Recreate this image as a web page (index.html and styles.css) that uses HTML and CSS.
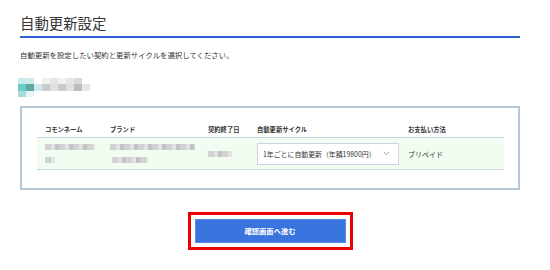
FILE: index.html
```html
<!DOCTYPE html>
<html lang="ja">
<head>
<meta charset="utf-8">
<link rel="stylesheet" href="styles.css">
</head>
<body>
<div class="page">
  <h1 class="title">自動更新設定</h1>
  <p class="desc">自動更新を設定したい契約と更新サイクルを選択してください。</p>
  <div class="blob">
    <span class="c t2"></span><span class="c t3"></span><span class="c w"></span><span class="c l1"></span><span class="c l2"></span><span class="c l1"></span><span class="c l2"></span><span class="c m1"></span><span class="c w"></span>
    <span class="c t1"></span><span class="c t4"></span><span class="c t3"></span><span class="c m2"></span><span class="c l3"></span><span class="c m2"></span><span class="c l3"></span><span class="c m3"></span><span class="c l2"></span>
    <span class="c t5"></span><span class="c t6"></span><span class="c w"></span><span class="c w"></span><span class="c w"></span><span class="c w"></span><span class="c w"></span><span class="c w"></span><span class="c w"></span>
  </div>
  <div class="box">
    <div class="grid head">
      <div class="cell">コモンネーム</div>
      <div class="cell">ブランド</div>
      <div class="cell">契約終了日</div>
      <div class="cell">自動更新サイクル</div>
      <div class="cell">お支払い方法</div>
    </div>
    <div class="grid row">
      <div class="cell blur">
        <div class="bl"><span class="b w50"></span></div>
        <div class="bl"><span class="b w10"></span></div>
      </div>
      <div class="cell blur">
        <div class="bl"><span class="b w85"></span></div>
        <div class="bl"><span class="b w36 off"></span></div>
      </div>
      <div class="cell blur">
        <div class="bl"><span class="b w24"></span></div>
      </div>
      <div class="cell">
        <div class="select">
          <span>1年ごとに自動更新（年額19800円）</span>
          <svg class="chev" width="7" height="5" viewBox="0 0 7 5"><path d="M0.8 1 L3.5 3.7 L6.2 1" fill="none" stroke="#8a97a6" stroke-width="0.9"/></svg>
        </div>
      </div>
      <div class="cell pay">プリペイド</div>
    </div>
  </div>
  <div class="actions">
    <div class="frame">
      <button class="btn">確認画面へ進む</button>
    </div>
  </div>
</div>
</body>
</html>
```
FILE: styles.css
```css
* { box-sizing: border-box; }
body {
  margin: 0;
  background: #fff;
  font-family: "Noto Sans CJK JP", "Noto Sans", sans-serif;
  color: #333;
}
.page {
  width: 500px;
  margin-left: 20px;
  padding-top: 12px;
}
.title {
  margin: 0;
  font-size: 14.4px;
  font-weight: 400;
  line-height: 22px;
  padding-bottom: 2px;
  border-bottom: 2px solid #2c5fd1;
  color: #333;
}
.desc {
  margin: 12px 0 0;
  font-size: 7.4px;
  line-height: 10px;
  color: #333;
}
.blob {
  display: grid;
  grid-template-columns: repeat(9, 8px);
  grid-template-rows: 6px 7px 6px;
  margin-top: 18px;
  margin-left: -2px;
  width: 72px;
}
.c { display: block; }
.w { background: #fff; }
.t1 { background: #6ccbc6; }
.t2 { background: #c6ebe8; }
.t3 { background: #cfeae8; }
.t4 { background: #5fa8a5; }
.t5 { background: #a6dcd9; }
.t6 { background: #e7f4f3; }
.l1 { background: #f0f0f0; }
.l2 { background: #e6e6e6; }
.l3 { background: #e0e0e0; }
.m1 { background: #d9d9d9; }
.m2 { background: #cbcbcb; }
.m3 { background: #bdbdbd; }
.box {
  margin-top: 9px;
  border: 2px solid #b6c6d9;
  padding: 14px 14px 18px 15px;
}
.grid {
  display: grid;
  grid-template-columns: 65px 98px 49px 151px 1fr;
}
.head {
  height: 16px;
  align-items: center;
  border-bottom: 1px solid #c6d6e1;
}
.head .cell {
  font-size: 6.3px;
  font-weight: 700;
  color: #333;
  padding-left: 8px;
}
.row {
  height: 32px;
  background: #f1fdf0;
  border-bottom: 1px solid #c6d6e1;
  align-items: center;
}
.row .cell { padding-left: 8px; }
.bl { height: 13px; display: flex; align-items: center; }
.b {
  display: block;
  height: 6px;
  background: repeating-linear-gradient(90deg, #d2d2d2 0 6px, #e2e2e2 6px 10px, #c4c4c4 10px 14px);
}
.w50 { width: 50px; }
.w10 { width: 10px; }
.w85 { width: 85px; }
.w36 { width: 36px; }
.w24 { width: 24px; }
.off { margin-left: 2px; }
.select {
  width: 142px;
  height: 22px;
  background: #fff;
  border: 1px solid #c6d6e1;
  display: flex;
  align-items: center;
  justify-content: space-between;
  padding: 0 8px 0 5px;
  font-size: 6.9px;
  color: #333;
}
.chev { display: block; }
.pay {
  font-size: 7px;
  color: #333;
}
.actions {
  display: flex;
  justify-content: center;
  margin-top: 22px;
}
.frame {
  border: 3px solid #ee0000;
  padding: 4px;
}
.btn {
  display: block;
  width: 151px;
  height: 24px;
  background: #3a74df;
  border: 1px solid #5b8be6;
  color: #fff;
  font-family: "Noto Sans CJK JP", sans-serif;
  font-size: 7.3px;
  font-weight: 700;
  padding: 0;
}
```
